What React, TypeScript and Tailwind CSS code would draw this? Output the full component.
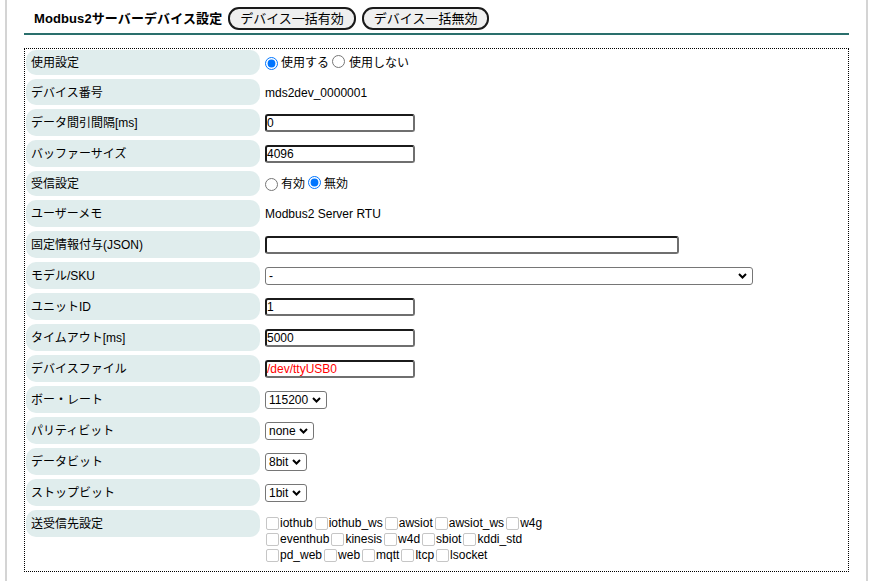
import React from 'react';

type Row = {
  label: string;
  h: string;
  value: React.ReactNode;
};

const Chevron = () => (
  <svg width="9" height="6" viewBox="0 0 9 6" className="shrink-0">
    <path d="M1 1l3.5 3.5L8 1" stroke="#000" strokeWidth="2" fill="none" />
  </svg>
);

const TextBox = ({ value, w = 'w-[150px]', red = false }: { value: string; w?: string; red?: boolean }) => (
  <div
    className={`${w} h-[18px] flex items-center rounded-[3px] border-2 border-t-[#1b1b1b] border-l-[#1b1b1b] border-r-[#6f6f6f] border-b-[#6f6f6f] bg-white leading-none ${red ? 'text-[#ff0000]' : 'text-black'}`}
  >
    {value}
  </div>
);

const SelectBox = ({ value, w }: { value: string; w: string }) => (
  <div className={`${w} h-[18px] flex items-center justify-between rounded-[3px] border border-[#767676] bg-white pl-[3px] pr-[5px] leading-none`}>
    <span>{value}</span>
    <Chevron />
  </div>
);

const Radio = ({ checked }: { checked: boolean }) => (
  <input type="radio" readOnly checked={checked} className="m-0 w-[13px] h-[13px] shrink-0" />
);

const Check = ({ label }: { label: string }) => (
  <span className="flex items-center">
    <span className="w-[13px] h-[13px] rounded-[2px] border border-[#c6c6c6] bg-white" />
    <span className="ml-[1px]">{label}</span>
  </span>
);

const targets = [
  ['iothub', 'iothub_ws', 'awsiot', 'awsiot_ws', 'w4g'],
  ['eventhub', 'kinesis', 'w4d', 'sbiot', 'kddi_std'],
  ['pd_web', 'web', 'mqtt', 'ltcp', 'lsocket'],
];

export default function App() {
  const rows: Row[] = [
    {
      label: '使用設定',
      h: 'h-[25px]',
      value: (
        <div className="flex items-center">
          <Radio checked />
          <span className="ml-[3px]">使用する</span>
          <span className="ml-[3px]"><Radio checked={false} /></span>
          <span className="ml-[4px]">使用しない</span>
        </div>
      ),
    },
    { label: 'デバイス番号', h: 'h-[26px]', value: <span>mds2dev_0000001</span> },
    { label: 'データ間引間隔[ms]', h: 'h-[27px]', value: <TextBox value="0" /> },
    { label: 'バッファーサイズ', h: 'h-[27px]', value: <TextBox value="4096" /> },
    {
      label: '受信設定',
      h: 'h-[25px]',
      value: (
        <div className="flex items-center">
          <Radio checked={false} />
          <span className="ml-[3px]">有効</span>
          <span className="ml-[3px]"><Radio checked /></span>
          <span className="ml-[3px]">無効</span>
        </div>
      ),
    },
    { label: 'ユーザーメモ', h: 'h-[27px]', value: <span>Modbus2 Server RTU</span> },
    { label: '固定情報付与(JSON)', h: 'h-[27px]', value: <TextBox value="" w="w-[414px]" /> },
    { label: 'モデル/SKU', h: 'h-[27px]', value: <SelectBox value="-" w="w-[488px]" /> },
    { label: 'ユニットID', h: 'h-[27px]', value: <TextBox value="1" /> },
    { label: 'タイムアウト[ms]', h: 'h-[27px]', value: <TextBox value="5000" /> },
    { label: 'デバイスファイル', h: 'h-[27px]', value: <TextBox value="/dev/ttyUSB0" red /> },
    { label: 'ボー・レート', h: 'h-[27px]', value: <SelectBox value="115200" w="w-[62px]" /> },
    { label: 'パリティビット', h: 'h-[27px]', value: <SelectBox value="none" w="w-[49px]" /> },
    { label: 'データビット', h: 'h-[27px]', value: <SelectBox value="8bit" w="w-[42px]" /> },
    { label: 'ストップビット', h: 'h-[27px]', value: <SelectBox value="1bit" w="w-[42px]" /> },
  ];

  return (
    <div className="w-[870px] h-[581px] overflow-hidden bg-white pl-[5px] text-[12px] text-black font-['Liberation_Sans','Noto_Sans_CJK_JP',sans-serif]">
      <div className="h-full w-[863px] border-x-2 border-[#d4d4d4] px-[17px] pt-[7px]">
        {/* header */}
        <div className="flex items-center h-[23px] pl-[10px]">
          <h2 className="text-[13px] font-bold leading-none tracking-[0.1px]">Modbus2サーバーデバイス設定</h2>
          <button className="ml-[6px] h-[23px] px-[10px] rounded-[11px] border-2 border-[#1a1a1a] bg-[#efefef] text-[13px] leading-none">
            デバイス一括有効
          </button>
          <button className="ml-[6px] h-[23px] px-[10px] rounded-[11px] border-2 border-[#1a1a1a] bg-[#efefef] text-[13px] leading-none">
            デバイス一括無効
          </button>
        </div>
        <div className="mt-[3px] h-[2px] bg-[#2a6f6c]" />

        {/* settings box */}
        <div className="mt-[13px] border border-dotted border-black pl-[1px] pt-[1px] pb-[8px] flex flex-col gap-[4px] leading-[16px]">
          {rows.map((r) => (
            <div key={r.label} className={`flex items-center gap-[5px] ${r.h}`}>
              <div className="w-[234px] h-full shrink-0 flex items-center rounded-[10px] bg-[#e0eded] pl-[5px] pt-[1px]">
                {r.label}
              </div>
              <div className="flex items-center pt-[1px]">{r.value}</div>
            </div>
          ))}
          <div className="flex items-start gap-[5px]">
            <div className="w-[234px] h-[27px] shrink-0 flex items-center rounded-[10px] bg-[#e0eded] pl-[5px] pt-[1px]">
              送受信先設定
            </div>
            <div className="pt-[5px] pl-[1px] flex flex-col">
              {targets.map((line, i) => (
                <div key={i} className="flex items-center gap-[2px] h-[16px]">
                  {line.map((t) => (
                    <Check key={t} label={t} />
                  ))}
                </div>
              ))}
            </div>
          </div>
        </div>
      </div>
    </div>
  );
}
